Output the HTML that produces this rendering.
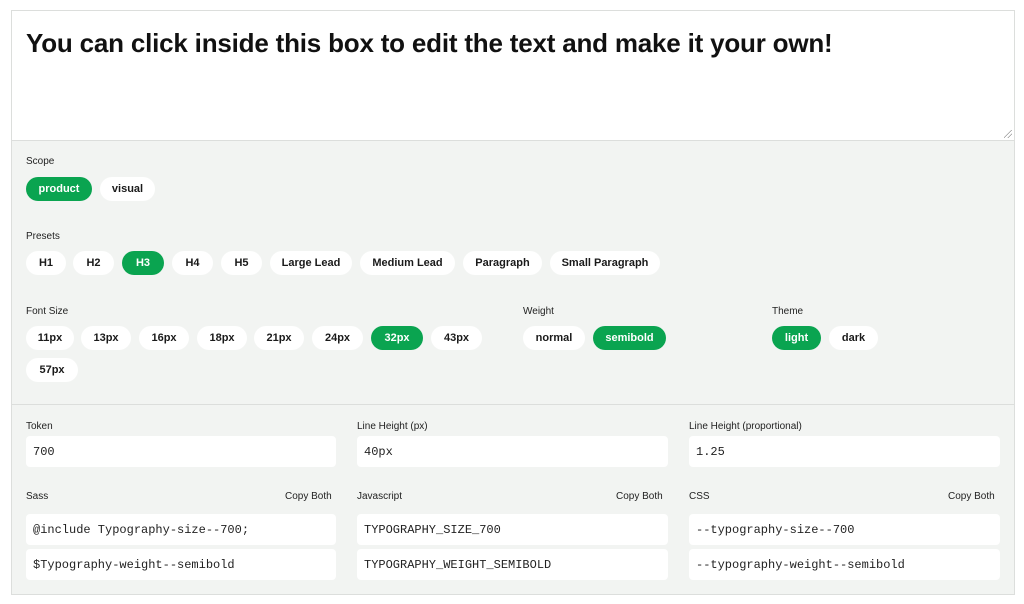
<!DOCTYPE html>
<html><head><meta charset="utf-8"><style>
*{box-sizing:border-box;margin:0;padding:0}
body{width:1024px;height:604px;background:#fff;font-family:"Liberation Sans",sans-serif;color:#1a1a1a;position:relative;overflow:hidden}
.box{position:absolute;left:11px;top:10px;width:1004px;height:585px;border:1px solid #dcdedc;background:#f2f4f2}
.ta{position:absolute;left:0;top:0;width:1002px;height:130px;background:#fff;border-bottom:1px solid #dcdedc}
.ta h1{position:absolute;left:14px;top:17px;font-size:26px;font-weight:bold;letter-spacing:-0.2px;white-space:nowrap;color:#111}
.sep{position:absolute;left:0;top:393px;width:1002px;height:1px;background:#dcdedc}
.lbl{position:absolute;font-size:10px;color:#222}
.p{position:absolute;height:24px;border-radius:12px;background:#fff;font-size:11px;font-weight:bold;display:flex;align-items:center;justify-content:center;color:#1a1a1a}
.g{background:#0aa450;color:#fff}
.in{position:absolute;height:31px;background:#fff;border-radius:4px;font-family:"Liberation Mono",monospace;font-size:12px;padding-left:7px;display:flex;align-items:center;color:#222}
.cb{position:absolute;font-size:10px;color:#222}
.grip{position:absolute;right:2px;bottom:2px;width:8px;height:8px;background:linear-gradient(135deg,transparent 45%,#999 46%,#999 52%,transparent 53%,transparent 70%,#999 71%,#999 77%,transparent 78%)}
</style></head><body>
<div class="box">
<div class="ta"><h1>You can click inside this box to edit the text and make it your own!</h1><div class="grip"></div></div>
<div class="sep"></div>
</div>
<div class="lbl" style="left:26px;top:156px">Scope</div>
<div class="p g" style="left:26px;top:177px;width:66px">product</div>
<div class="p" style="left:100px;top:177px;width:55px">visual</div>
<div class="lbl" style="left:26px;top:231px">Presets</div>
<div class="p" style="left:26px;top:251px;width:40px">H1</div>
<div class="p" style="left:73px;top:251px;width:41px">H2</div>
<div class="p g" style="left:122px;top:251px;width:42px">H3</div>
<div class="p" style="left:172px;top:251px;width:41px">H4</div>
<div class="p" style="left:221px;top:251px;width:41px">H5</div>
<div class="p" style="left:270px;top:251px;width:82px">Large Lead</div>
<div class="p" style="left:360px;top:251px;width:95px">Medium Lead</div>
<div class="p" style="left:463px;top:251px;width:79px">Paragraph</div>
<div class="p" style="left:550px;top:251px;width:110px">Small Paragraph</div>
<div class="lbl" style="left:26px;top:306px">Font Size</div>
<div class="p" style="left:26px;top:326px;width:48px">11px</div>
<div class="p" style="left:81px;top:326px;width:50px">13px</div>
<div class="p" style="left:139px;top:326px;width:50px">16px</div>
<div class="p" style="left:197px;top:326px;width:50px">18px</div>
<div class="p" style="left:254px;top:326px;width:50px">21px</div>
<div class="p" style="left:312px;top:326px;width:51px">24px</div>
<div class="p g" style="left:371px;top:326px;width:52px">32px</div>
<div class="p" style="left:431px;top:326px;width:51px">43px</div>
<div class="p" style="left:26px;top:358px;width:52px">57px</div>
<div class="lbl" style="left:523px;top:306px">Weight</div>
<div class="p" style="left:523px;top:326px;width:62px">normal</div>
<div class="p g" style="left:593px;top:326px;width:73px">semibold</div>
<div class="lbl" style="left:772px;top:306px">Theme</div>
<div class="p g" style="left:772px;top:326px;width:49px">light</div>
<div class="p" style="left:829px;top:326px;width:49px">dark</div>

<div class="lbl" style="left:26px;top:421px">Token</div>
<div class="in" style="left:26px;top:436px;width:310px">700</div>
<div class="lbl" style="left:357px;top:421px">Line Height (px)</div>
<div class="in" style="left:357px;top:436px;width:311px">40px</div>
<div class="lbl" style="left:689px;top:421px">Line Height (proportional)</div>
<div class="in" style="left:689px;top:436px;width:311px">1.25</div>

<div class="lbl" style="left:26px;top:491px">Sass</div>
<div class="cb" style="left:285px;top:491px">Copy Both</div>
<div class="in" style="left:26px;top:514px;width:310px">@include Typography-size--700;</div>
<div class="in" style="left:26px;top:549px;width:310px">$Typography-weight--semibold</div>
<div class="lbl" style="left:357px;top:491px">Javascript</div>
<div class="cb" style="left:616px;top:491px">Copy Both</div>
<div class="in" style="left:357px;top:514px;width:311px">TYPOGRAPHY_SIZE_700</div>
<div class="in" style="left:357px;top:549px;width:311px">TYPOGRAPHY_WEIGHT_SEMIBOLD</div>
<div class="lbl" style="left:689px;top:491px">CSS</div>
<div class="cb" style="left:948px;top:491px">Copy Both</div>
<div class="in" style="left:689px;top:514px;width:311px">--typography-size--700</div>
<div class="in" style="left:689px;top:549px;width:311px">--typography-weight--semibold</div>
</body></html>
